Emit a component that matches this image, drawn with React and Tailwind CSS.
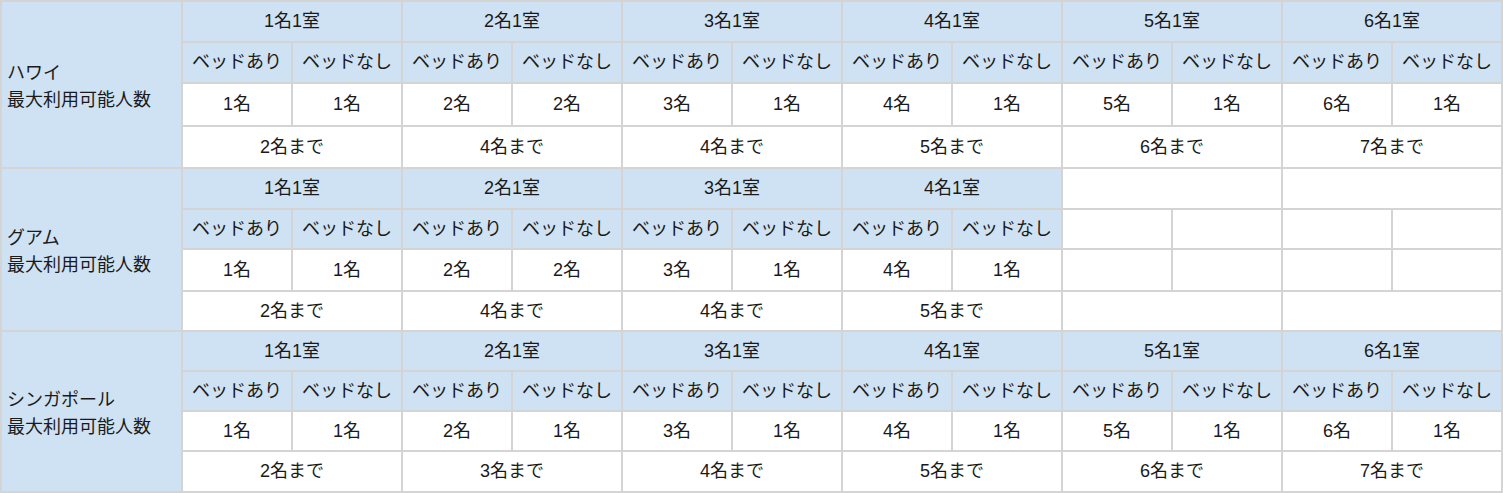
import React from "react";

const sections = [
  {
    name: "ハワイ",
    groups: 6,
    counts: [[1, 1], [2, 2], [3, 1], [4, 1], [5, 1], [6, 1]],
    totals: [2, 4, 4, 5, 6, 7],
    rows: ["h-[41px]", "h-[41px]", "h-[43px]", "h-[42px]"],
  },
  {
    name: "グアム",
    groups: 4,
    counts: [[1, 1], [2, 2], [3, 1], [4, 1]],
    totals: [2, 4, 4, 5],
    rows: ["h-[41px]", "h-[40px]", "h-[42px]", "h-[40px]"],
  },
  {
    name: "シンガポール",
    groups: 6,
    counts: [[1, 1], [2, 1], [3, 1], [4, 1], [5, 1], [6, 1]],
    totals: [2, 3, 4, 5, 6, 7],
    rows: ["h-[40px]", "h-[40px]", "h-[40px]", "h-[41px]"],
  },
];

const ALL = [0, 1, 2, 3, 4, 5];

const cell = "border-2 border-[#d4d4d4] text-center align-middle p-0";
const blue = "bg-[#cfe2f3]";

const Section = ({ s }) => {
  return (
    <>
      {/* room type row */}
      <tr className={s.rows[0]}>
        <td rowSpan={4} className={`${cell} ${blue} text-left pl-[5px] pt-[4px] leading-[27px]`}>
          {s.name}
          <br />
          最大利用可能人数
        </td>
        {ALL.map((i) =>
          i < s.groups ? (
            <td key={i} colSpan={2} className={`${cell} ${blue}`}>
              {i + 1}名1室
            </td>
          ) : (
            <td key={i} colSpan={2} className={`${cell} bg-white`} />
          )
        )}
      </tr>
      {/* bed row */}
      <tr className={s.rows[1]}>
        {ALL.map((i) =>
          i < s.groups ? (
            <React.Fragment key={i}>
              <td className={`${cell} ${blue}`}>ベッドあり</td>
              <td className={`${cell} ${blue}`}>ベッドなし</td>
            </React.Fragment>
          ) : (
            <React.Fragment key={i}>
              <td className={`${cell} bg-white`} />
              <td className={`${cell} bg-white`} />
            </React.Fragment>
          )
        )}
      </tr>
      {/* count row */}
      <tr className={s.rows[2]}>
        {ALL.map((i) =>
          i < s.groups ? (
            <React.Fragment key={i}>
              <td className={`${cell} bg-white`}>{s.counts[i][0]}名</td>
              <td className={`${cell} bg-white`}>{s.counts[i][1]}名</td>
            </React.Fragment>
          ) : (
            <React.Fragment key={i}>
              <td className={`${cell} bg-white`} />
              <td className={`${cell} bg-white`} />
            </React.Fragment>
          )
        )}
      </tr>
      {/* total row */}
      <tr className={s.rows[3]}>
        {ALL.map((i) => (
          <td key={i} colSpan={2} className={`${cell} bg-white`}>
            {i < s.groups ? `${s.totals[i]}名まで` : ""}
          </td>
        ))}
      </tr>
    </>
  );
};

export default function App() {
  return (
    <div
      className="bg-white w-[1503px] text-[18px] text-[#1a1a1a]"
      style={{ fontFamily: '"Liberation Sans", "Noto Sans CJK JP", sans-serif' }}
    >
      <table className="border-collapse table-fixed w-[1501px]">
        <colgroup>
          <col className="w-[181px]" />
          {Array.from({ length: 12 }).map((_, i) => (
            <col key={i} className="w-[110px]" />
          ))}
        </colgroup>
        <tbody>
          {sections.map((s) => (
            <Section key={s.name} s={s} />
          ))}
        </tbody>
      </table>
    </div>
  );
}
